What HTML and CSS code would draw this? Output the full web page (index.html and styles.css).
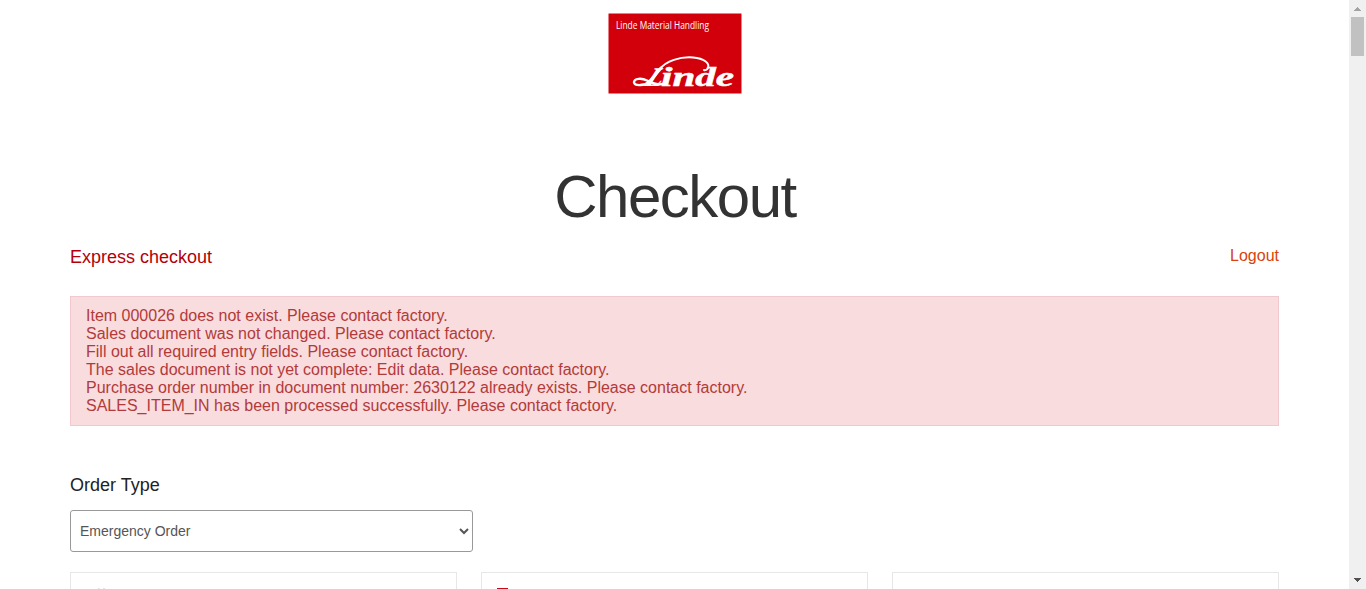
FILE: index.html
```html
<!DOCTYPE html>
<html lang="en">
<head>
<meta charset="utf-8">
<title>Checkout</title>
<link rel="stylesheet" href="styles.css">
</head>
<body>
<div class="window">
  <main class="page">
    <header class="brand">
      <svg class="logo" viewBox="0 0 134 81" role="img" aria-label="Linde Material Handling">
        <rect x=".5" y=".5" width="133" height="80" fill="#d1000a"/>
        <text class="logo-tagline" x="8" y="15.5" textLength="93" lengthAdjust="spacingAndGlyphs">Linde Material Handling</text>
        <text class="logo-initial" transform="translate(36 72.500) skewX(-24)">L</text>
        <text class="logo-name" x="53" y="72.5" textLength="73" lengthAdjust="spacingAndGlyphs">inde</text>
        <g fill="none" stroke="#fff" stroke-linecap="round">
          <path stroke-width="2" d="M52 56C58 48 72 43.500 85 44.500C96 45.500 102 50 100 55C99 57 97 57.500 96 57"/>
          <path stroke-width="3" d="M53 55C48 61 44 66 41 69"/>
          <path stroke-width="2.400" d="M41 69C37 72.500 27 73.500 26 69.500C26 65 34 65 39 67.500C44 70 48 72.500 54 71"/>
        </g>
      </svg>
    </header>
    <h1 class="title">Checkout</h1>
    <div class="links">
      <a class="express">Express checkout</a>
      <a class="logout">Logout</a>
    </div>
    <div class="alert">
      <p>Item 000026 does not exist. Please contact factory.</p>
      <p>Sales document was not changed. Please contact factory.</p>
      <p>Fill out all required entry fields. Please contact factory.</p>
      <p>The sales document is not yet complete: Edit data. Please contact factory.</p>
      <p>Purchase order number in document number: 2630122 already exists. Please contact factory.</p>
      <p>SALES_ITEM_IN has been processed successfully. Please contact factory.</p>
    </div>
    <label class="label" for="order">Order Type</label>
    <select class="select" id="order"><option>Emergency Order</option></select>
    <div class="cards">
      <section class="card"><span class="mark mark-faint"></span></section>
      <section class="card"><span class="mark mark-red"></span></section>
      <section class="card"></section>
    </div>
  </main>
  <aside class="scrollbar">
    <svg class="arrow" viewBox="0 0 17 17" shape-rendering="crispEdges"><path fill="#a3a3a3" d="M8 7h1v1h1v1h1v1h1v1H5v-1h1V9h1V8h1z"/></svg>
    <div class="thumb"></div>
    <svg class="arrow arrow-down" viewBox="0 0 17 17" shape-rendering="crispEdges"><path fill="#505050" d="M5 6h7v1h-1v1h-1v1H9v1H8V9H7V8H6V7H5z"/></svg>
  </aside>
</div>
</body>
</html>
```
FILE: styles.css
```css
* { box-sizing: border-box; }
body { margin: 0; background: #fff; font-family: "Liberation Sans", Arial, sans-serif; overflow: hidden; }
.window { display: flex; height: 589px; overflow: hidden; }
.page { flex: 1; padding: 13px 70px 0; }
.brand { display: flex; justify-content: center; height: 81px; padding-left: 1px; }
.logo { width: 134px; height: 81px; }
.logo-tagline { font: 10px "Open Sans", sans-serif; fill: #fff; }
.logo-initial { font: italic bold 27px "Liberation Serif", serif; fill: #fff; }
.logo-name { font: italic bold 27px "Liberation Serif", serif; fill: #fff; stroke: #fff; stroke-width: .5px; }
.title { margin: 69px 0 0; padding-left: 1px; height: 67px; line-height: 68px; font-size: 60px; font-weight: 400; letter-spacing: -1.5px; text-align: center; color: #333; }
.links { display: flex; justify-content: space-between; height: 66px; padding-top: 16px; }
.express { font-size: 18px; line-height: 22px; color: #b3000c; }
.logout { font-size: 16px; line-height: 20px; color: #d9430b; }
.alert { height: 130px; padding: 10px 15px; border: 1px solid #f0c8ce; background: #f8dcde; color: #b33a3a; font-size: 16px; line-height: 18px; }
.alert p { margin: 0; }
.label { display: block; margin-top: 48px; font-size: 18px; line-height: 22px; color: #222; }
.select { display: block; width: 403px; height: 42px; margin-top: 14px; padding: 0 6px 0 5px; border: 1px solid #999; border-radius: 3px; background: #fff; color: #555; font: 14px "Liberation Sans", Arial, sans-serif; }
.cards { display: grid; grid-template-columns: repeat(3, 387px); column-gap: 24px; margin-top: 20px; }
.card { height: 60px; padding: 15px; border: 1px solid #e7e7e7; }
.mark { display: block; height: 2px; }
.mark-red { width: 11px; background: #c20a18; }
.mark-faint { width: 2px; margin-left: 12px; background: #eee0dc; box-shadow: 5px 0 #eee0dc; }
.scrollbar { display: flex; flex-direction: column; align-items: center; width: 17px; background: #f0f0f0; }
.arrow { width: 17px; height: 17px; }
.thumb { width: 13px; height: 39px; background: #c1c1c1; }
.arrow-down { margin-top: auto; }
```
